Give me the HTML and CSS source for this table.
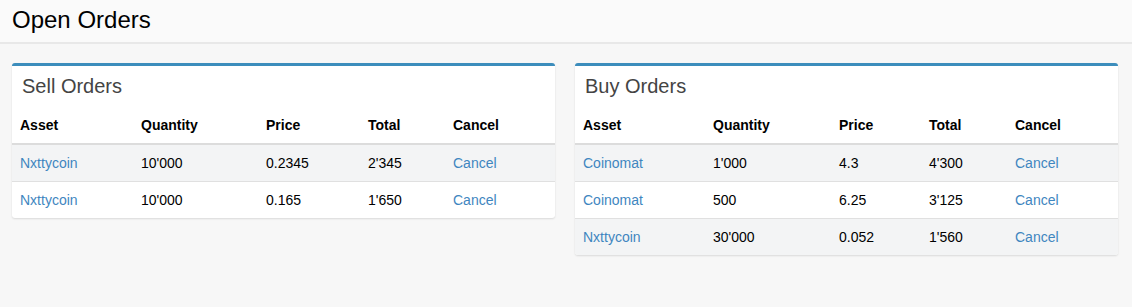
FILE: index.html
```html
<!DOCTYPE html>
<html>
<head>
<meta charset="utf-8">
<link rel="stylesheet" href="styles.css">
</head>
<body>
<header class="page-header">
  <h1>Open Orders</h1>
</header>
<main class="content">
  <section class="box">
    <div class="box-header"><h3>Sell Orders</h3></div>
    <table class="orders sell">
      <colgroup><col class="c1"><col class="c2"><col class="c3"><col class="c4"><col class="c5"></colgroup>
      <thead><tr><th>Asset</th><th>Quantity</th><th>Price</th><th>Total</th><th>Cancel</th></tr></thead>
      <tbody>
        <tr><td><a href="#">Nxttycoin</a></td><td>10'000</td><td>0.2345</td><td>2'345</td><td><a href="#">Cancel</a></td></tr>
        <tr><td><a href="#">Nxttycoin</a></td><td>10'000</td><td>0.165</td><td>1'650</td><td><a href="#">Cancel</a></td></tr>
      </tbody>
    </table>
  </section>
  <section class="box">
    <div class="box-header"><h3>Buy Orders</h3></div>
    <table class="orders buy">
      <colgroup><col class="c1"><col class="c2"><col class="c3"><col class="c4"><col class="c5"></colgroup>
      <thead><tr><th>Asset</th><th>Quantity</th><th>Price</th><th>Total</th><th>Cancel</th></tr></thead>
      <tbody>
        <tr><td><a href="#">Coinomat</a></td><td>1'000</td><td>4.3</td><td>4'300</td><td><a href="#">Cancel</a></td></tr>
        <tr><td><a href="#">Coinomat</a></td><td>500</td><td>6.25</td><td>3'125</td><td><a href="#">Cancel</a></td></tr>
        <tr><td><a href="#">Nxttycoin</a></td><td>30'000</td><td>0.052</td><td>1'560</td><td><a href="#">Cancel</a></td></tr>
      </tbody>
    </table>
  </section>
</main>
</body>
</html>
```
FILE: styles.css
```css
* { box-sizing: border-box; }
html, body { margin: 0; padding: 0; }
body {
  background: #f7f7f7;
  font-family: "Liberation Sans", Arial, sans-serif;
  font-size: 14px;
  color: #000;
  height: 307px;
}
.page-header {
  height: 44px;
  background: #fafafa;
  border-bottom: 2px solid #e8e8e8;
  padding: 0 12px;
}
.page-header h1 {
  margin: 0;
  font-size: 24px;
  font-weight: normal;
  line-height: 40px;
  color: #000;
}
.content {
  display: flex;
  align-items: flex-start;
  gap: 20px;
  padding: 19px 14px 0 12px;
}
.box {
  flex: 1 1 0;
  background: #fff;
  border-top: 3px solid #3c8dbc;
  border-radius: 3px;
  box-shadow: 0 1px 2px rgba(0,0,0,0.12);
  overflow: hidden;
}
.box-header {
  height: 41px;
  padding: 9px 10px 0 10px;
}
.box-header h3 {
  margin: 0;
  font-size: 20px;
  font-weight: normal;
  line-height: 22px;
  color: #444;
}
.orders {
  width: 100%;
  border-collapse: collapse;
  table-layout: fixed;
}
.orders th, .orders td {
  text-align: left;
  padding: 8px;
  line-height: 20px;
  white-space: nowrap;
}
.orders th {
  font-weight: bold;
  color: #000;
  border-bottom: 2px solid #dcdcdc;
}
.orders td { border-top: 1px solid #e0e0e0; }
.orders thead + tbody tr:first-child td { border-top: 0; }
.orders tbody tr:nth-child(odd) { background: #f3f4f5; }
.orders a { color: #3f86c0; text-decoration: none; }
.sell .c1 { width: 121px; }
.sell .c2 { width: 125px; }
.sell .c3 { width: 102px; }
.sell .c4 { width: 85px; }
.buy .c1 { width: 130px; }
.buy .c2 { width: 126px; }
.buy .c3 { width: 90px; }
.buy .c4 { width: 86px; }
```
